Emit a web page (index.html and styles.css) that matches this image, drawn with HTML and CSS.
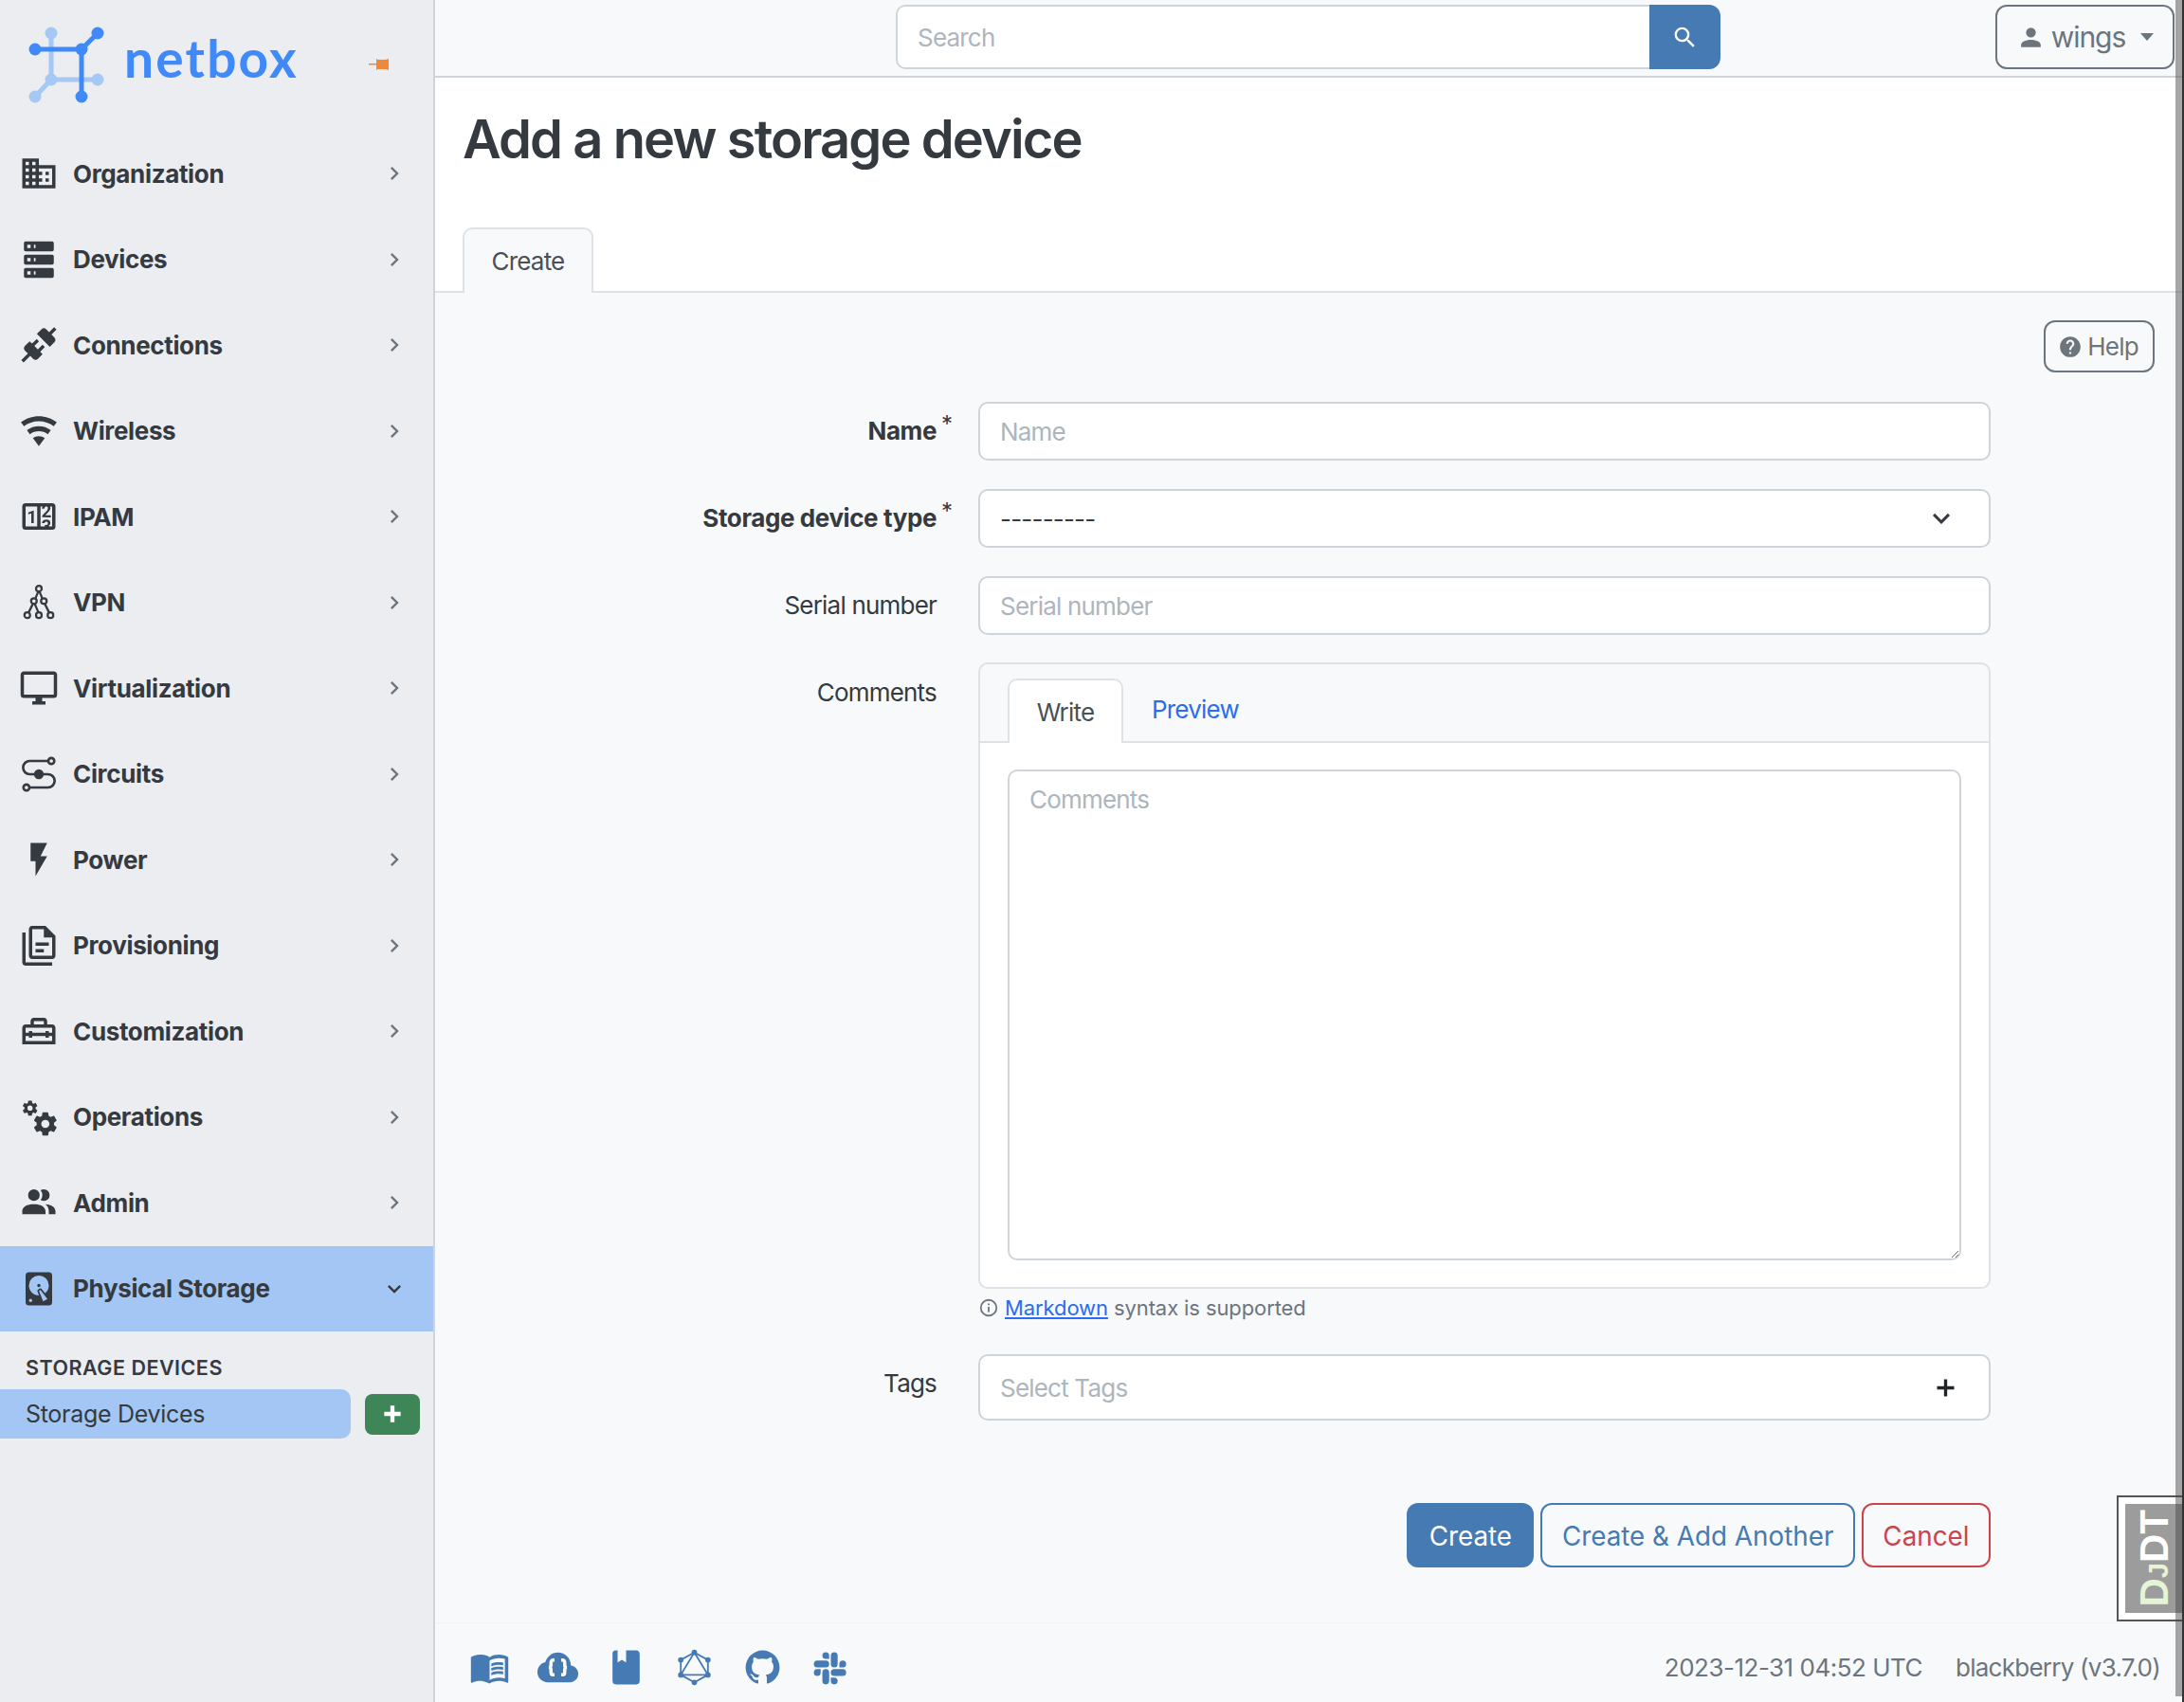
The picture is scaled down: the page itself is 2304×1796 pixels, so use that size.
FILE: index.html
```html
<!DOCTYPE html>
<html lang="en">
<head>
    <meta charset="UTF-8">
    <title>Add a new storage device</title>
    <link rel="stylesheet" href="styles.css">
</head>
<body>
    <div class="layout">
        <nav class="sidebar">
            <div class="brand">
                <svg class="logo" viewBox="0 0 140 120" width="140" height="120">
                    <g class="logo-light">
                        <path d="M54 35V84M54 84H103M54 84L37 102"/>
                        <circle cx="54" cy="35" r="6.5"/>
                        <circle cx="54" cy="84" r="6.5"/>
                        <circle cx="103" cy="84" r="6.5"/>
                        <circle cx="37" cy="102" r="6.5"/>
                    </g>
                    <g class="logo-dark">
                        <path d="M37 52H86M86 52V102M86 52L103 35"/>
                        <circle cx="37" cy="52" r="6.5"/>
                        <circle cx="86" cy="52" r="6.5"/>
                        <circle cx="103" cy="35" r="6.5"/>
                        <circle cx="86" cy="102" r="6.5"/>
                    </g>
                </svg>
                <span class="brand-name">netbox</span>
                <svg class="pin" viewBox="0 0 21 12" width="21" height="12"><path d="M0 5H8V6.500H0ZM8 0L10 1H17.500L21 0V12L17.500 11H10L8 12Z"/></svg>
            </div>
            <ul class="menu">
                <li class="menu-item"><svg class="menu-icon" viewBox="0 0 24 24"><path d="M18,15H16V17H18M18,11H16V13H18M20,19H12V17H14V15H12V13H14V11H12V9H20M10,7H8V5H10M10,11H8V9H10M10,15H8V13H10M10,19H8V17H10M6,7H4V5H6M6,11H4V9H6M6,15H4V13H6M6,19H4V17H6M12,7V3H2V21H22V7H12Z"/></svg><span>Organization</span><svg class="chevron" viewBox="0 0 24 24"><path d="M8.59,16.58L13.17,12L8.59,7.41L10,6L16,12L10,18L8.59,16.58Z"/></svg></li>
                <li class="menu-item"><svg class="menu-icon" viewBox="0 0 24 24"><path d="M4,1H20A1,1 0 0,1 21,2V6A1,1 0 0,1 20,7H4A1,1 0 0,1 3,6V2A1,1 0 0,1 4,1M4,9H20A1,1 0 0,1 21,10V14A1,1 0 0,1 20,15H4A1,1 0 0,1 3,14V10A1,1 0 0,1 4,9M4,17H20A1,1 0 0,1 21,18V22A1,1 0 0,1 20,23H4A1,1 0 0,1 3,22V18A1,1 0 0,1 4,17M9,5H10V3H9V5M9,13H10V11H9V13M9,21H10V19H9V21M5,3V5H7V3H5M5,11V13H7V11H5M5,19V21H7V19H5Z"/></svg><span>Devices</span><svg class="chevron" viewBox="0 0 24 24"><path d="M8.59,16.58L13.17,12L8.59,7.41L10,6L16,12L10,18L8.59,16.58Z"/></svg></li>
                <li class="menu-item"><svg class="menu-icon" viewBox="0 0 24 24"><path d="M21.4 7.500C22.200 8.300 22.200 9.600 21.400 10.300L18.600 13.100L10.800 5.300L13.600 2.500C14.400 1.700 15.700 1.700 16.400 2.500L18.200 4.300L21.200 1.300L22.600 2.700L19.600 5.700L21.400 7.500M15.600 13.300L14.200 11.900L11.400 14.700L9.300 12.600L12.100 9.800L10.700 8.400L7.900 11.200L6.400 9.800L3.600 12.600C2.800 13.400 2.800 14.700 3.600 15.400L5.400 17.200L1.400 21.200L2.800 22.600L6.800 18.600L8.600 20.400C9.400 21.200 10.700 21.200 11.400 20.400L14.200 17.600L12.800 16.200L15.600 13.300Z"/></svg><span>Connections</span><svg class="chevron" viewBox="0 0 24 24"><path d="M8.59,16.58L13.17,12L8.59,7.41L10,6L16,12L10,18L8.59,16.58Z"/></svg></li>
                <li class="menu-item"><svg class="menu-icon" viewBox="0 0 24 24"><path d="M12,21L15.6,16.2C14.6,15.45 13.35,15 12,15C10.65,15 9.4,15.45 8.4,16.2L12,21M12,3C7.95,3 4.21,4.34 1.2,6.6L3,9C5.5,7.12 8.62,6 12,6C15.38,6 18.5,7.12 21,9L22.8,6.6C19.79,4.34 16.05,3 12,3M12,9C9.3,9 6.81,9.89 4.8,11.4L6.6,13.8C8.1,12.67 9.97,12 12,12C14.03,12 15.9,12.67 17.4,13.8L19.2,11.4C17.19,9.89 14.7,9 12,9Z"/></svg><span>Wireless</span><svg class="chevron" viewBox="0 0 24 24"><path d="M8.59,16.58L13.17,12L8.59,7.41L10,6L16,12L10,18L8.59,16.58Z"/></svg></li>
                <li class="menu-item"><svg class="menu-icon" viewBox="0 0 24 24"><path d="M4,4H20A2,2 0 0,1 22,6V18A2,2 0 0,1 20,20H4A2,2 0 0,1 2,18V6A2,2 0 0,1 4,4M4,6V18H11V6H4M20,18V6H18.76C19,6.54 18.95,7.07 18.95,7.13C18.88,7.8 18.41,8.5 18.24,8.75L15.91,11.3L19.23,11.28L19.24,12.5L14.04,12.47L14,11.47C14,11.47 17.05,8.24 17.2,7.95C17.34,7.67 17.91,6 16.5,6C15.27,6.05 15.41,7.3 15.41,7.3L13.87,7.31C13.87,7.31 13.88,6.65 14.25,6H13V18H15.58L15.57,17.14L16.54,17.13C16.54,17.13 17.45,16.97 17.46,16.08C17.5,15.08 16.65,15.08 16.5,15.08C16.37,15.08 15.43,15.13 15.43,15.95H13.91C13.91,15.95 13.95,13.89 16.5,13.89C19.1,13.89 18.96,15.91 18.96,15.91C18.96,15.91 19,17.16 17.85,17.63L18.37,18H20M8.92,16H7.42V10.2L5.62,10.76V9.53L8.76,8.41H8.92V16Z"/></svg><span>IPAM</span><svg class="chevron" viewBox="0 0 24 24"><path d="M8.59,16.58L13.17,12L8.59,7.41L10,6L16,12L10,18L8.59,16.58Z"/></svg></li>
                <li class="menu-item"><svg class="menu-icon stroke-icon" viewBox="0 0 24 24"><path d="M12 4.500L9 11.500M12 4.500L15 11.500M9 11.500L5.500 18.500M9 11.500L12 18.500M15 11.500L18.500 18.500"/><circle class="hollow" cx="12" cy="3.500" r="1.700"/><circle class="hollow" cx="9" cy="11" r="1.700"/><circle class="hollow" cx="15" cy="11" r="1.700"/><circle class="hollow" cx="5" cy="19.500" r="1.700"/><circle class="hollow" cx="12" cy="19.500" r="1.700"/><circle class="hollow" cx="19" cy="19.500" r="1.700"/></svg><span>VPN</span><svg class="chevron" viewBox="0 0 24 24"><path d="M8.59,16.58L13.17,12L8.59,7.41L10,6L16,12L10,18L8.59,16.58Z"/></svg></li>
                <li class="menu-item"><svg class="menu-icon" viewBox="0 0 24 24"><path d="M21,16H3V4H21M21,2H3C1.89,2 1,2.89 1,4V16A2,2 0 0,0 3,18H10V20H8V22H16V20H14V18H21A2,2 0 0,0 23,16V4C23,2.89 22.1,2 21,2Z"/></svg><span>Virtualization</span><svg class="chevron" viewBox="0 0 24 24"><path d="M8.59,16.58L13.17,12L8.59,7.41L10,6L16,12L10,18L8.59,16.58Z"/></svg></li>
                <li class="menu-item"><svg class="menu-icon stroke-icon circuit" viewBox="0 0 24 24"><path d="M17.500 4H6.500A3.500 3.500 0 0 0 6.500 12H17.500A3.500 3.500 0 0 1 17.500 20H6.500"/><circle class="hollow" cx="19.500" cy="4" r="1.800"/><circle class="hollow" cx="4.500" cy="20" r="1.800"/><circle class="dot" cx="12" cy="12" r="2.200"/></svg><span>Circuits</span><svg class="chevron" viewBox="0 0 24 24"><path d="M8.59,16.58L13.17,12L8.59,7.41L10,6L16,12L10,18L8.59,16.58Z"/></svg></li>
                <li class="menu-item"><svg class="menu-icon" viewBox="0 0 24 24"><path d="M7,2V13H10V22L17,10H13L17,2H7Z"/></svg><span>Power</span><svg class="chevron" viewBox="0 0 24 24"><path d="M8.59,16.58L13.17,12L8.59,7.41L10,6L16,12L10,18L8.59,16.58Z"/></svg></li>
                <li class="menu-item"><svg class="menu-icon" viewBox="0 0 24 24"><path d="M16 0H8C6.900 0 6 .9 6 2V18C6 19.100 6.900 20 8 20H20C21.100 20 22 19.100 22 18V6L16 0M20 18H8V2H15V7H20V18M4 4V22H20V24H4C2.900 24 2 23.100 2 22V4H4M10 10V12H18V10H10M10 14V16H15V14H10Z"/></svg><span>Provisioning</span><svg class="chevron" viewBox="0 0 24 24"><path d="M8.59,16.58L13.17,12L8.59,7.41L10,6L16,12L10,18L8.59,16.58Z"/></svg></li>
                <li class="menu-item"><svg class="menu-icon" viewBox="0 0 24 24"><path d="M20 8H17V6C17 4.900 16.100 4 15 4H9C7.900 4 7 4.900 7 6V8H4C2.900 8 2 8.900 2 10V20H22V10C22 8.900 21.100 8 20 8M9 6H15V8H9V6M20 18H4V15H6V16H8V15H16V16H18V15H20V18M18 13V12H16V13H8V12H6V13H4V10H20V13H18Z"/></svg><span>Customization</span><svg class="chevron" viewBox="0 0 24 24"><path d="M8.59,16.58L13.17,12L8.59,7.41L10,6L16,12L10,18L8.59,16.58Z"/></svg></li>
                <li class="menu-item"><svg class="menu-icon" viewBox="0 0 24 24"><path d="M15.9,18.45C17.25,18.45 18.35,17.35 18.35,16C18.35,14.65 17.25,13.55 15.9,13.55C14.54,13.55 13.45,14.65 13.45,16C13.45,17.35 14.54,18.45 15.9,18.45M21.1,16.68L22.58,17.84C22.71,17.95 22.75,18.13 22.66,18.29L21.26,20.71C21.17,20.86 21,20.92 20.83,20.86L19.09,20.16C18.73,20.44 18.33,20.67 17.91,20.85L17.64,22.7C17.62,22.87 17.47,23 17.3,23H14.5C14.32,23 14.18,22.87 14.15,22.7L13.89,20.85C13.46,20.67 13.07,20.44 12.71,20.16L10.96,20.86C10.81,20.92 10.62,20.86 10.54,20.71L9.14,18.29C9.05,18.13 9.09,17.95 9.22,17.84L10.7,16.68L10.65,16L10.7,15.31L9.22,14.16C9.09,14.05 9.05,13.86 9.14,13.71L10.54,11.29C10.62,11.13 10.81,11.07 10.96,11.13L12.71,11.84C13.07,11.56 13.46,11.32 13.89,11.15L14.15,9.29C14.18,9.13 14.32,9 14.5,9H17.3C17.47,9 17.62,9.13 17.64,9.29L17.91,11.15C18.33,11.32 18.73,11.56 19.09,11.84L20.83,11.13C21,11.07 21.17,11.13 21.26,11.29L22.66,13.71C22.75,13.86 22.71,14.05 22.58,14.16L21.1,15.31L21.15,16L21.1,16.68M6.69,8.07C7.56,8.07 8.26,7.37 8.26,6.5C8.26,5.63 7.56,4.92 6.69,4.92A1.58,1.58 0 0,0 5.11,6.5C5.11,7.37 5.82,8.07 6.69,8.07M10.03,6.94L11,7.68C11.07,7.75 11.09,7.87 11.03,7.97L10.13,9.53C10.08,9.63 9.96,9.67 9.86,9.63L8.74,9.18L8,9.62L7.81,10.81C7.79,10.92 7.7,11 7.59,11H5.79C5.67,11 5.58,10.92 5.56,10.81L5.4,9.62L4.64,9.18L3.5,9.63C3.41,9.67 3.3,9.63 3.24,9.53L2.34,7.97C2.28,7.87 2.31,7.75 2.39,7.68L3.34,6.94L3.31,6.5L3.34,6.06L2.39,5.32C2.31,5.25 2.28,5.13 2.34,5.03L3.24,3.47C3.3,3.37 3.41,3.33 3.5,3.37L4.63,3.82L5.4,3.38L5.56,2.19C5.58,2.08 5.67,2 5.79,2H7.59C7.7,2 7.79,2.08 7.81,2.19L8,3.38L8.74,3.82L9.86,3.37C9.96,3.33 10.08,3.37 10.13,3.47L11.03,5.03C11.09,5.13 11.07,5.25 11,5.32L10.03,6.06L10.06,6.5L10.03,6.94Z"/></svg><span>Operations</span><svg class="chevron" viewBox="0 0 24 24"><path d="M8.59,16.58L13.17,12L8.59,7.41L10,6L16,12L10,18L8.59,16.58Z"/></svg></li>
                <li class="menu-item"><svg class="menu-icon" viewBox="0 0 24 24"><path d="M16 17V19H2V17S2 13 9 13 16 17 16 17M12.500 7.500A3.500 3.500 0 1 0 9 11A3.500 3.500 0 0 0 12.500 7.500M15.940 13A5.320 5.320 0 0 1 18 17V19H22V17S22 13.370 15.940 13M15 4A3.390 3.390 0 0 0 13.070 4.590A5 5 0 0 1 13.070 10.410A3.390 3.390 0 0 0 15 11A3.500 3.500 0 0 0 15 4Z"/></svg><span>Admin</span><svg class="chevron" viewBox="0 0 24 24"><path d="M8.59,16.58L13.17,12L8.59,7.41L10,6L16,12L10,18L8.59,16.58Z"/></svg></li>
                <li class="menu-item active"><svg class="menu-icon" viewBox="0 0 24 24"><path d="M6,2H18A2,2 0 0,1 20,4V20A2,2 0 0,1 18,22H6A2,2 0 0,1 4,20V4A2,2 0 0,1 6,2M12,4A6,6 0 0,0 6,10C6,13.31 8.69,16 12.1,16L11.22,13.77C10.95,13.29 11.11,12.68 11.59,12.4L12.45,11.9C12.93,11.63 13.54,11.79 13.82,12.27L15.74,14.69C17.12,13.59 18,11.9 18,10A6,6 0 0,0 12,4M12,9A1,1 0 0,1 13,10A1,1 0 0,1 12,11A1,1 0 0,1 11,10A1,1 0 0,1 12,9M7,18A1,1 0 0,0 6,19A1,1 0 0,0 7,20A1,1 0 0,0 8,19A1,1 0 0,0 7,18M12.09,13.27L14.58,19.58L17.17,18.08L12.95,12.77L12.09,13.27Z"/></svg><span>Physical Storage</span><svg class="chevron" viewBox="0 0 24 24"><path d="M7.41,8.58L12,13.17L16.59,8.58L18,10L12,16L6,10L7.41,8.58Z"/></svg></li>
            </ul>
            <div class="submenu-title">STORAGE DEVICES</div>
            <div class="submenu-row">
                <a class="submenu-link">Storage Devices</a>
                <a class="submenu-add"><svg viewBox="0 0 24 24" width="26" height="26"><path d="M20 14H14V20H10V14H4V10H10V4H14V10H20V14Z"/></svg></a>
            </div>
        </nav>

        <div class="main">
            <header class="topbar">
                <div class="search">
                    <input class="search-input" type="text" placeholder="Search">
                    <button class="search-btn"><svg viewBox="0 0 24 24" width="29" height="29"><path d="M9.5,3A6.5,6.5 0 0,1 16,9.5C16,11.11 15.41,12.59 14.44,13.73L14.71,14H15.5L20.5,19L19,20.5L14,15.5V14.71L13.73,14.44C12.59,15.41 11.11,16 9.5,16A6.5,6.5 0 0,1 3,9.5A6.5,6.5 0 0,1 9.5,3M9.5,5C7,5 5,7 5,9.5C5,12 7,14 9.5,14C12,14 14,12 14,9.5C14,7 12,5 9.5,5Z"/></svg></button>
                </div>
                <a class="user-btn">
                    <svg viewBox="0 0 24 24" width="31" height="31"><path d="M12,4A4,4 0 0,1 16,8A4,4 0 0,1 12,12A4,4 0 0,1 8,8A4,4 0 0,1 12,4M12,14C16.42,14 20,15.79 20,18V20H4V18C4,15.79 7.58,14 12,14Z"/></svg>
                    <span>wings</span>
                    <i class="caret"></i>
                </a>
            </header>

            <section class="page-head">
                <h1>Add a new storage device</h1>
                <div class="tab-row"><span class="tab">Create</span></div>
            </section>

            <section class="content">
                <div class="help-row">
                    <a class="help-btn"><svg viewBox="0 0 24 24" width="26" height="26"><path d="M15.07,11.25L14.17,12.17C13.45,12.89 13,13.5 13,15H11V14.5C11,13.39 11.45,12.39 12.17,11.67L13.41,10.41C13.78,10.05 14,9.55 14,9C14,7.89 13.1,7 12,7A2,2 0 0,0 10,9H8A4,4 0 0,1 12,5A4,4 0 0,1 16,9C16,9.88 15.64,10.67 15.07,11.25M13,19H11V17H13M12,2A10,10 0 0,0 2,12A10,10 0 0,0 12,22A10,10 0 0,0 22,12C22,6.47 17.5,2 12,2Z"/></svg>Help</a>
                </div>
                <form class="form">
                    <label class="label required">Name<sup>*</sup></label>
                    <input class="field" type="text" placeholder="Name">

                    <label class="label required">Storage device type<sup>*</sup></label>
                    <div class="select-wrap">
                        <select class="field select"><option>---------</option></select>
                        <svg class="select-arrow" viewBox="0 0 24 24" width="36" height="36"><path d="M7.41,8.58L12,13.17L16.59,8.58L18,10L12,16L6,10L7.41,8.58Z"/></svg>
                    </div>

                    <label class="label">Serial number</label>
                    <input class="field" type="text" placeholder="Serial number">

                    <label class="label">Comments</label>
                    <div class="comments">
                        <div class="editor">
                            <div class="editor-tabs">
                                <span class="editor-tab current">Write</span>
                                <a class="editor-tab">Preview</a>
                            </div>
                            <div class="editor-body">
                                <textarea class="textarea" placeholder="Comments"></textarea>
                            </div>
                        </div>
                        <div class="hint"><svg viewBox="0 0 24 24" width="22" height="22"><path d="M11,9H13V7H11M12,20C7.59,20 4,16.41 4,12C4,7.59 7.59,4 12,4C16.41,4 20,7.59 20,12C20,16.41 16.41,20 12,20M12,2A10,10 0 0,0 2,12A10,10 0 0,0 12,22A10,10 0 0,0 22,12A10,10 0 0,0 12,2M11,17H13V11H11V17Z"/></svg><a>Markdown</a> syntax is supported</div>
                    </div>

                    <label class="label">Tags</label>
                    <div class="field tags"><span>Select Tags</span><svg viewBox="0 0 24 24" width="27" height="27"><path d="M10.500 4H13.500V10.500H20V13.500H13.500V20H10.500V13.500H4V10.500H10.500Z"/></svg></div>
                </form>
                <div class="actions">
                    <a class="btn btn-primary">Create</a>
                    <a class="btn btn-outline">Create &amp; Add Another</a>
                    <a class="btn btn-danger">Cancel</a>
                </div>
            </section>

            <footer class="footer">
                <div class="footer-links">
                    <svg viewBox="0 0 24 24"><path d="M12 21.500C10.650 20.650 8.200 20 6.500 20C4.850 20 3.150 20.300 1.750 21.050C1.650 21.100 1.600 21.100 1.500 21.100C1.250 21.100 1 20.850 1 20.600V6C1.600 5.550 2.250 5.250 3 5C4.110 4.650 5.330 4.500 6.500 4.500C8.450 4.500 10.550 4.900 12 6C13.450 4.900 15.550 4.500 17.500 4.500C18.670 4.500 19.890 4.650 21 5C21.750 5.250 22.400 5.550 23 6V20.600C23 20.850 22.750 21.100 22.500 21.100C22.400 21.100 22.350 21.100 22.250 21.050C20.850 20.300 19.150 20 17.500 20C15.800 20 13.350 20.650 12 21.500M12 8V19.500C13.350 18.650 15.800 18 17.500 18C18.700 18 19.900 18.150 21 18.500V7C19.900 6.650 18.700 6.500 17.500 6.500C15.800 6.500 13.350 7.150 12 8M13 9.800V11.400C15 10.400 18 10.300 20 10.800V9.200C18 8.800 15 8.900 13 9.800M13 12.400V14C15 13 18 12.900 20 13.400V11.800C18 11.400 15 11.500 13 12.400M13 15V16.600C15 15.600 18 15.500 20 16V14.400C18 14 15 14.100 13 15Z"/></svg>
                    <svg class="cloud" viewBox="0 0 24 24"><path d="M21.860 12.500C21.100 11.630 20.150 11.130 19 11C19 9.050 18.320 7.400 16.960 6.040C15.600 4.680 13.950 4 12 4C10.420 4 9 4.470 7.750 5.430S5.670 7.620 5.250 9.150C4 9.430 2.960 10.080 2.170 11.100S1 13.280 1 14.580C1 16.090 1.540 17.380 2.610 18.430C3.690 19.500 5 20 6.500 20H18.500C19.750 20 20.810 19.560 21.690 18.690C22.560 17.810 23 16.750 23 15.500C23 14.350 22.620 13.350 21.860 12.500Z"/><path class="braces" d="M10.200 8H9.600C8.600 8 8.300 8.700 8.300 9.500V10.800C8.300 11.500 7.900 12 7.100 12C7.900 12 8.300 12.500 8.300 13.200V14.500C8.300 15.300 8.600 16 9.600 16H10.200M13.800 8H14.400C15.400 8 15.700 8.700 15.700 9.500V10.800C15.700 11.500 16.100 12 16.900 12C16.100 12 15.700 12.500 15.700 13.200V14.500C15.700 15.300 15.400 16 14.400 16H13.800"/></svg>
                    <svg viewBox="0 0 24 24"><path d="M18 22A2 2 0 0 0 20 20V4C20 2.890 19.100 2 18 2H12V9L9.500 7.500L7 9V2H6A2 2 0 0 0 4 4V20A2 2 0 0 0 6 22H18Z"/></svg>
                    <svg class="graphql" viewBox="0 0 24 24"><path d="M12 3.200L20 7.600V16.400L12 20.800L4 16.400V7.600ZM12 3.200L4 16.400H20Z"/><circle cx="12" cy="3.200" r="1.600"/><circle cx="20" cy="7.600" r="1.600"/><circle cx="20" cy="16.400" r="1.600"/><circle cx="12" cy="20.800" r="1.600"/><circle cx="4" cy="16.400" r="1.600"/><circle cx="4" cy="7.600" r="1.600"/></svg>
                    <svg viewBox="0 0 24 24"><path d="M12,2A10,10 0 0,0 2,12C2,16.42 4.87,20.17 8.84,21.5C9.34,21.58 9.5,21.27 9.5,21C9.5,20.77 9.5,20.14 9.5,19.31C6.73,19.91 6.14,17.97 6.14,17.97C5.68,16.81 5.03,16.5 5.03,16.5C4.12,15.88 5.1,15.9 5.1,15.9C6.1,15.97 6.63,16.93 6.63,16.93C7.5,18.45 8.97,18 9.54,17.76C9.63,17.11 9.89,16.67 10.17,16.42C7.95,16.17 5.62,15.31 5.62,11.5C5.62,10.39 6,9.5 6.65,8.79C6.55,8.54 6.2,7.5 6.75,6.15C6.75,6.15 7.59,5.88 9.5,7.17C10.29,6.95 11.15,6.84 12,6.84C12.85,6.84 13.71,6.95 14.5,7.17C16.41,5.88 17.25,6.15 17.25,6.15C17.8,7.5 17.45,8.54 17.35,8.79C18,9.5 18.38,10.39 18.38,11.5C18.38,15.32 16.04,16.16 13.81,16.41C14.17,16.72 14.5,17.33 14.5,18.26C14.5,19.6 14.5,20.68 14.5,21C14.5,21.27 14.66,21.59 15.17,21.5C19.14,20.16 22,16.42 22,12A10,10 0 0,0 12,2Z"/></svg>
                    <svg viewBox="0 0 24 24"><path d="M6,15A2,2 0 0,1 4,17A2,2 0 0,1 2,15A2,2 0 0,1 4,13H6V15M7,15A2,2 0 0,1 9,13A2,2 0 0,1 11,15V20A2,2 0 0,1 9,22A2,2 0 0,1 7,20V15M9,7A2,2 0 0,1 7,5A2,2 0 0,1 9,3A2,2 0 0,1 11,5V7H9M9,8A2,2 0 0,1 11,10A2,2 0 0,1 9,12H4A2,2 0 0,1 2,10A2,2 0 0,1 4,8H9M17,10A2,2 0 0,1 19,8A2,2 0 0,1 21,10A2,2 0 0,1 19,12H17V10M16,10A2,2 0 0,1 14,12A2,2 0 0,1 12,10V5A2,2 0 0,1 14,3A2,2 0 0,1 16,5V10M14,18A2,2 0 0,1 16,20A2,2 0 0,1 14,22A2,2 0 0,1 12,20V18H14M14,17A2,2 0 0,1 12,15A2,2 0 0,1 14,13H19A2,2 0 0,1 21,15A2,2 0 0,1 19,17H14Z"/></svg>
                </div>
                <div class="footer-info">
                    <span class="footer-date">2023-12-31 04:52 UTC</span>
                    <span>blackberry (v3.7.0)</span>
                </div>
            </footer>
        </div>
    </div>

    <div class="djdt"><div class="djdt-inner"><span class="djdt-text"><b>Dj</b>DT</span></div></div>
    <div class="scrollbar"></div>
</body>
</html>
```

FILE: styles.css
```css
*{
    box-sizing: border-box;
}

html, body{
    margin: 0;
    height: 100%;
}

body{
    width: 2304px;
    height: 1796px;
    overflow: hidden;
    position: relative;
    font-family: Inter, "Liberation Sans", sans-serif;
    font-size: 26px;
    letter-spacing: -0.8px;
    color: #343a40;
    background-color: #f8f9fb;
}

ul{
    list-style: none;
    margin: 0;
    padding: 0;
}

.layout{
    display: flex;
    height: 1796px;
}

/* sidebar */
.sidebar{
    width: 459px;
    flex: none;
    background-color: #ebedf1;
    border-right: 2px solid #ced4da;
}

.brand{
    height: 138px;
    display: flex;
    align-items: flex-start;
}

.logo{
    flex: none;
    margin-right: -9px;
}

.logo-light path, .logo-dark path{
    fill: none;
    stroke-width: 5;
}

.logo-light path{
    stroke: #a5c8f5;
}

.logo-light circle{
    fill: #a5c8f5;
}

.logo-dark path{
    stroke: #4089f8;
}

.logo-dark circle{
    fill: #4089f8;
}

.brand-name{
    font-family: Lato, sans-serif;
    font-weight: 700;
    font-size: 55px;
    letter-spacing: 2.2px;
    line-height: 55px;
    margin-top: 34px;
    color: #4089f8;
}

.pin{
    fill: #f0883a;
    margin: 62px 0 0 74px;
}

.menu-item{
    height: 90.5px;
    display: flex;
    align-items: center;
    padding: 0 27px 0 20px;
    font-weight: 700;
    letter-spacing: -0.35px;
}

.menu-icon{
    width: 42px;
    height: 42px;
    flex: none;
    fill: #343a40;
    margin-right: 15px;
}

.stroke-icon{
    fill: none;
    stroke: #343a40;
    stroke-width: 1.300;
}

.stroke-icon.circuit{
    stroke-width: 1.500;
}

.stroke-icon .hollow{
    fill: #ebedf1;
}

.stroke-icon .dot{
    fill: #343a40;
}

.menu-item span{
    flex: 1;
}

.chevron{
    width: 28px;
    height: 28px;
    flex: none;
    fill: #6c757d;
}

.menu-item.active{
    background-color: #a3c6f4;
}

.menu-item.active .chevron{
    fill: #343a40;
}

.submenu-title{
    margin-top: 24px;
    padding-left: 27px;
    font-size: 21.500px;
    font-weight: 600;
    letter-spacing: 0.5px;
    line-height: 28px;
}

.submenu-row{
    display: flex;
    align-items: center;
    margin-top: 9px;
}

.submenu-link{
    width: 370px;
    height: 52px;
    line-height: 52px;
    padding-left: 27px;
    font-size: 25px;
    letter-spacing: -0.3px;
    background-color: #a3c6f4;
    border-radius: 0 10px 10px 0;
}

.submenu-add{
    width: 58px;
    height: 43px;
    margin-left: 15px;
    background-color: #3e8557;
    border-radius: 8px;
    display: flex;
    align-items: center;
    justify-content: center;
    fill: #fff;
}

/* topbar */
.main{
    flex: 1;
    min-width: 0;
    display: flex;
    flex-direction: column;
}

.topbar{
    height: 82px;
    flex: none;
    display: flex;
    justify-content: space-between;
    padding: 5px 10px 0 486px;
    border-bottom: 2px solid #ced4da;
}

.search{
    display: flex;
    width: 870px;
    height: 68px;
}

.search-input{
    flex: 1;
    min-width: 0;
    font: inherit;
    letter-spacing: -0.8px;
    padding: 0 21px;
    color: #343a40;
    background-color: #fff;
    border: 2px solid #ced4da;
    border-right: none;
    border-radius: 10px 0 0 10px;
    outline: none;
}

input::placeholder, textarea::placeholder{
    color: #adb5bd;
    opacity: 1;
}

.search-btn{
    width: 75px;
    border: none;
    padding: 0;
    background-color: #467ab3;
    border-radius: 0 12px 12px 0;
    fill: #fff;
    display: flex;
    align-items: center;
    justify-content: center;
}

.user-btn{
    width: 189px;
    height: 68px;
    display: flex;
    align-items: center;
    justify-content: center;
    gap: 6px;
    font-size: 30px;
    letter-spacing: -1.1px;
    color: #6c757d;
    fill: #6c757d;
    border: 2px solid #6c757d;
    border-radius: 12px;
}

.caret{
    border-left: 7.500px solid transparent;
    border-right: 7.500px solid transparent;
    border-top: 8.500px solid #6c757d;
    margin-left: 10px;
}

/* page title and tab */
.page-head{
    height: 227px;
    flex: none;
    background-color: #fff;
    border-bottom: 2px solid #dee2e6;
    padding-left: 29px;
    display: flex;
    flex-direction: column;
    justify-content: space-between;
}

h1{
    margin: 32px 0 0;
    font-size: 56px;
    font-weight: 600;
    letter-spacing: -1.9px;
    line-height: 66px;
}

.tab-row{
    display: flex;
    margin-bottom: -2px;
}

.tab{
    width: 138px;
    height: 69px;
    display: flex;
    align-items: center;
    justify-content: center;
    color: #495057;
    background-color: #f8f9fb;
    border: 2px solid #dee2e6;
    border-bottom: none;
    border-radius: 10px 10px 0 0;
}

/* form */
.content{
    flex: 1;
    min-height: 0;
}

.help-row{
    display: flex;
    justify-content: flex-end;
    padding: 29px 31px 31px 0;
}

.help-btn{
    width: 117px;
    height: 55px;
    display: flex;
    align-items: center;
    justify-content: center;
    gap: 5px;
    padding-right: 2px;
    color: #6c757d;
    fill: #6c757d;
    border: 2px solid #6c757d;
    border-radius: 12px;
}

.form{
    display: grid;
    grid-template-columns: 529px 1fr;
    column-gap: 44px;
    row-gap: 30px;
    padding-right: 204px;
}

.label{
    text-align: right;
    line-height: 32px;
    padding-top: 15px;
}

.label.required{
    font-weight: 700;
    letter-spacing: -0.4px;
}

.label sup{
    position: absolute;
    margin-left: 5px;
    font-size: 24px;
    font-weight: 400;
    line-height: 1;
    margin-top: -3px;
}

.field{
    width: 100%;
    height: 62px;
    padding: 0 21px;
    font: inherit;
    letter-spacing: -0.8px;
    color: #343a40;
    background-color: #fff;
    border: 2px solid #ced4da;
    border-radius: 10px;
    outline: none;
}

.select-wrap{
    position: relative;
}

.select{
    appearance: none;
}

.select-arrow{
    position: absolute;
    right: 34px;
    top: 13px;
    fill: #343a40;
}

.comments{
    margin-top: -1px;
}

.editor{
    border: 2px solid #dee2e6;
    border-radius: 10px;
    overflow: hidden;
}

.editor-tabs{
    height: 83px;
    display: flex;
    align-items: flex-end;
    padding-left: 29px;
    border-bottom: 2px solid #dee2e6;
}

.editor-tab{
    height: 68px;
    line-height: 66px;
    padding: 0 30px;
    margin-bottom: -2px;
    color: #2b6cf0;
}

.editor-tab.current{
    width: 122px;
    padding: 0;
    text-align: center;
    color: #495057;
    background-color: #fff;
    border: 2px solid #dee2e6;
    border-bottom: none;
    border-radius: 10px 10px 0 0;
    line-height: 68px;
}

.editor-body{
    background-color: #fff;
    padding: 28px 29px;
    height: 574px;
}

.textarea{
    display: block;
    width: 100%;
    height: 518px;
    padding: 14px 21px;
    font: inherit;
    letter-spacing: -0.8px;
    background-color: #fff;
    border: 2px solid #ced4da;
    border-radius: 10px;
    outline: none;
}

.hint{
    display: flex;
    align-items: center;
    height: 32px;
    margin: 4px 0 3px;
    font-size: 22px;
    letter-spacing: -0.1px;
    color: #6c757d;
    fill: #6c757d;
    white-space: pre;
}

.hint svg{
    margin-right: 6px;
}

.hint a{
    color: #2b6cf0;
    text-decoration: underline;
}

.tags{
    height: 70px;
    display: flex;
    align-items: center;
    justify-content: space-between;
    padding-right: 32px;
    color: #adb5bd;
    fill: #212529;
}

.actions{
    display: flex;
    justify-content: flex-end;
    gap: 7px;
    margin-top: 87px;
    padding-right: 204px;
}

.btn{
    height: 68px;
    display: flex;
    align-items: center;
    padding: 2px 20.500px 0;
    font-size: 27.800px;
    letter-spacing: 0;
    border: 2px solid;
    border-radius: 12px;
}

.btn-primary{
    width: 134px;
    justify-content: center;
    padding: 2px 0 0;
    color: #fff;
    background-color: #467ab3;
    border-color: #467ab3;
}

.btn-outline{
    color: #467ab3;
    border-color: #467ab3;
}

.btn-danger{
    color: #cb444a;
    border-color: #cb444a;
}

/* footer */
.footer{
    height: 84px;
    flex: none;
    display: flex;
    align-items: center;
    justify-content: space-between;
    padding: 10px 25px 0 36px;
    border-top: 1px solid #f1f3f5;
}

.footer-links{
    display: flex;
    gap: 29px;
    fill: #467ab3;
}

.footer-links svg{
    width: 43px;
    height: 43px;
}

.footer-links .cloud{
    width: 47px;
    height: 47px;
    margin: -2px;
}

.footer-links .braces{
    fill: none;
    stroke: #f8f9fb;
    stroke-width: 1.800;
}

.footer-links .graphql path{
    fill: none;
    stroke: #467ab3;
    stroke-width: 1;
}

.footer-info{
    display: flex;
    gap: 35px;
    color: #6c757d;
    letter-spacing: -0.75px;
}

.footer-date{
    letter-spacing: -0.5px;
}

/* debug toolbar handle, sits over the page edge */
.djdt{
    position: absolute;
    left: 2233px;
    top: 1578px;
    width: 71px;
    height: 133px;
    padding: 7px 0 7px 7px;
    background-color: #fff;
    border: 2px solid #555;
    border-right: none;
}

.djdt-inner{
    height: 100%;
    background-color: #9c9c9c;
    display: flex;
    align-items: center;
    justify-content: center;
}

.djdt-text{
    writing-mode: vertical-rl;
    transform: rotate(180deg);
    font-family: "Liberation Sans", sans-serif;
    font-weight: 700;
    font-size: 42px;
    font-variant-caps: small-caps;
    letter-spacing: 0;
    line-height: 1;
    color: #fff;
}

.djdt-text b{
    color: #e5f4d6;
}

.scrollbar{
    position: absolute;
    left: 2295px;
    top: 0;
    width: 9px;
    height: 1796px;
    border-right: 2px solid #333;
    background: linear-gradient(rgba(70, 70, 70, 0.48), rgba(70, 70, 70, 0.48)) no-repeat 0 0 / 100% 1790px;
}
```
